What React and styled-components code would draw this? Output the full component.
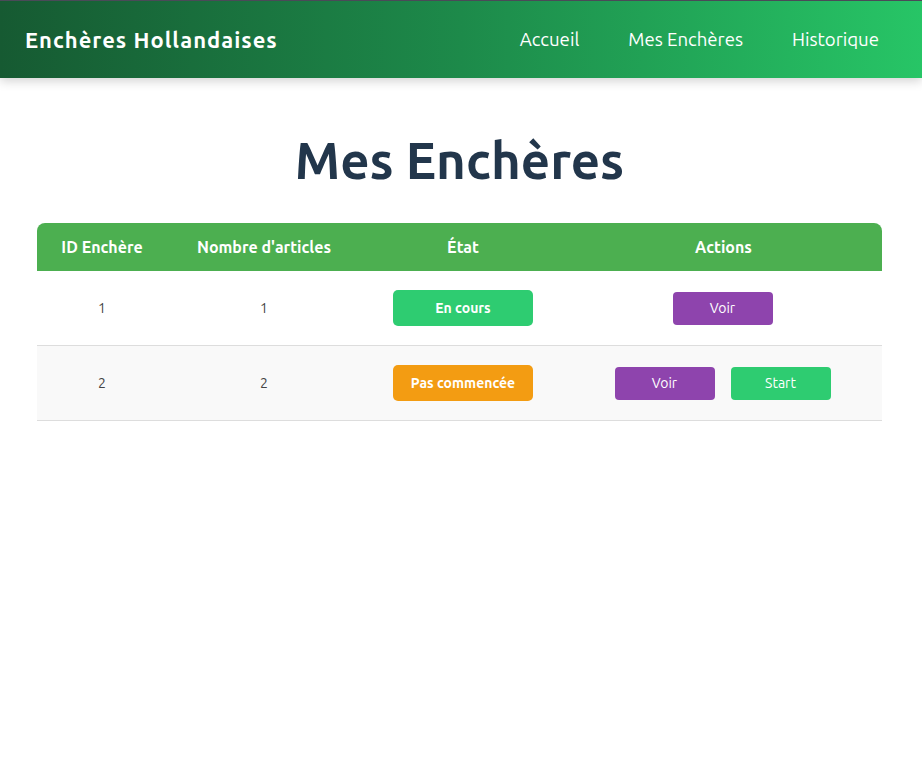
import React from "react";
import styled, { createGlobalStyle } from "styled-components";

const GlobalStyle = createGlobalStyle`
  * { box-sizing: border-box; }
  body {
    margin: 0;
    background: #fff;
    font-family: "Ubuntu", "Noto Sans", "Open Sans", sans-serif;
    color: #333;
  }
`;

const Header = styled.header`
  display: flex;
  align-items: center;
  justify-content: space-between;
  height: 78px;
  padding: 0 43px 0 25px;
  border-top: 1px solid #4a4a58;
  background: linear-gradient(90deg, #165a32 0%, #1d8a4a 50%, #27c566 100%);
  box-shadow: 0 3px 10px rgba(0, 0, 0, 0.18);
`;

const Brand = styled.div`
  color: #fff;
  font-size: 22px;
  font-weight: 700;
  letter-spacing: 1px;
`;

const Nav = styled.nav`
  display: flex;
  gap: 49px;
`;

const NavLink = styled.a`
  color: #fff;
  font-size: 18.6px;
  text-decoration: none;
`;

const Main = styled.main`
  padding: 0 40px 0 37px;
`;

const Title = styled.h1`
  margin: 53px 0 34px;
  text-align: center;
  font-size: 51px;
  font-weight: 700;
  color: #22364b;
`;

const Table = styled.table`
  width: 845px;
  border-collapse: separate;
  border-spacing: 0;
`;

const Th = styled.th`
  width: ${p => p.w}px;
  height: 48px;
  padding: 0;
  background: #4caf50;
  color: #fff;
  font-size: 16px;
  font-weight: 700;
  text-align: center;
  &:first-child { border-top-left-radius: 8px; }
  &:last-child { border-top-right-radius: 8px; }
`;

const Row = styled.tr`
  background: ${p => (p.alt ? "#f9f9f9" : "#fff")};
`;

const Td = styled.td`
  height: 75px;
  padding: 0;
  text-align: center;
  font-size: 14px;
  color: #444;
  border-bottom: 1px solid #ddd;
`;

const Badge = styled.span`
  display: inline-flex;
  align-items: center;
  justify-content: center;
  width: 140px;
  height: 36px;
  border-radius: 5px;
  background: ${p => p.bg};
  color: #fff;
  font-size: 14px;
  font-weight: 700;
`;

const Actions = styled.div`
  display: flex;
  justify-content: center;
  gap: 16px;
  padding-right: 2px;
`;

const Button = styled.button`
  width: 100px;
  height: 33px;
  border: none;
  border-radius: 4px;
  background: ${p => p.bg};
  color: #fff;
  font-family: inherit;
  font-size: 14px;
  cursor: pointer;
`;

const rows = [
  { id: 1, count: 1, state: "En cours", color: "#2ecc71", start: false },
  { id: 2, count: 2, state: "Pas commencée", color: "#f39c12", start: true },
];

export default function App() {
  return (
    <>
      <GlobalStyle />
      <Header>
        <Brand>Enchères Hollandaises</Brand>
        <Nav>
          <NavLink href="#">Accueil</NavLink>
          <NavLink href="#">Mes Enchères</NavLink>
          <NavLink href="#">Historique</NavLink>
        </Nav>
      </Header>
      <Main>
        <Title>Mes Enchères</Title>
        <Table>
          <thead>
            <tr>
              <Th w={130}>ID Enchère</Th>
              <Th w={194}>Nombre d'articles</Th>
              <Th w={204}>État</Th>
              <Th w={317}>Actions</Th>
            </tr>
          </thead>
          <tbody>
            {rows.map((r, i) => (
              <Row key={r.id} alt={i % 2 === 1}>
                <Td>{r.id}</Td>
                <Td>{r.count}</Td>
                <Td>
                  <Badge bg={r.color}>{r.state}</Badge>
                </Td>
                <Td>
                  <Actions>
                    <Button bg="#8e44ad">Voir</Button>
                    {r.start && <Button bg="#2ecc71">Start</Button>}
                  </Actions>
                </Td>
              </Row>
            ))}
          </tbody>
        </Table>
      </Main>
    </>
  );
}
